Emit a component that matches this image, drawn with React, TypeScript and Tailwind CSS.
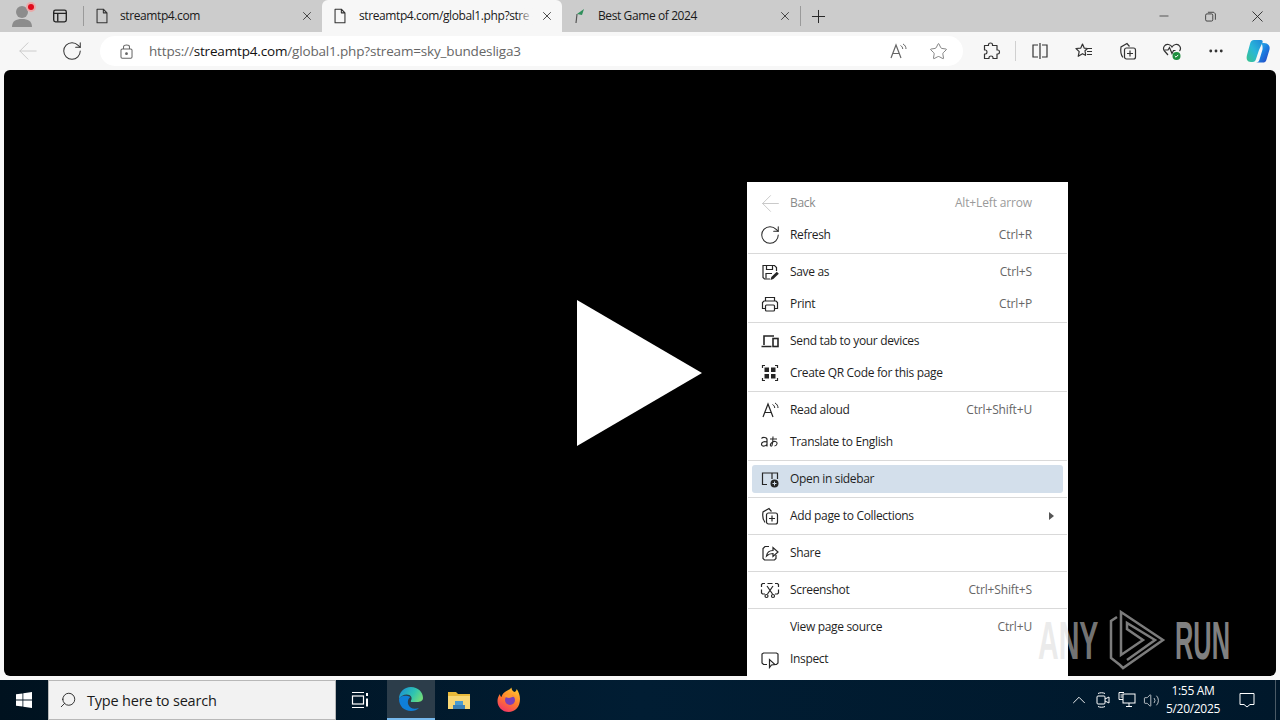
import type { ReactNode } from 'react';
import { X, Plus, Minus, ArrowLeft, RotateCw, Star, MoreHorizontal, ChevronUp, Search, Volume2 } from 'lucide-react';

const UI_FONT = "font-['Open_Sans','Noto_Sans',sans-serif]";

function Svg({ size = 20, children, className = '' }: { size?: number; children: ReactNode; className?: string }) {
  return (
    <svg width={size} height={size} viewBox="0 0 20 20" fill="none" stroke="currentColor" strokeWidth="1.2" className={className}>
      {children}
    </svg>
  );
}

const DocIcon = () => (
  <Svg size={18}>
    <path d="M4.5 2.5h7l4 4v11h-11z M11.5 2.5v4h4" strokeLinejoin="round" />
  </Svg>
);

const FlagIcon = () => (
  <svg width="14" height="16" viewBox="0 0 14 16">
    <path d="M3 15 L4 6" stroke="#555" strokeWidth="1.2" />
    <path d="M4 6 L11 1 L9 7 Z" fill="#2f8f5b" />
  </svg>
);

const ReadAloudIcon = () => (
  <Svg>
    <path d="M3 17 L8 4 L13 17 M5 12.5h6" />
    <path d="M12.5 4.5c1.5.8 2.2 2 2.2 3.5 M15 3c2 1 3 3 3 5" strokeWidth="1" />
  </Svg>
);

const SaveIcon = () => (
  <Svg>
    <path d="M10 17H4.5L3 15.5V3.5h11.5l2 2V9" />
    <path d="M6.5 3.5v4h6v-4 M6 16.5v-5h6" />
    <path d="M10.5 18l.8-3 5.5-5.2 2 2-5.5 5.3z" fill="currentColor" stroke="none" />
  </Svg>
);

const PrintIcon = () => (
  <Svg>
    <path d="M5.5 7V3.5h9V7 M5.5 14.5H2.5V8.5l1.5-1.5h12l1.5 1.5v6h-3" />
    <rect x="5.5" y="11" width="9" height="6" rx="1" />
  </Svg>
);

const DevicesIcon = () => (
  <Svg>
    <path d="M4 14V5h10 M1.5 15.5h10" strokeWidth="1.6" />
    <rect x="13" y="7.5" width="5" height="8" strokeWidth="1.6" />
  </Svg>
);

const QrIcon = () => (
  <Svg>
    <path d="M2.5 5V2.5H5 M15 2.5h2.5V5 M2.5 15v2.5H5 M15 17.5h2.5V15" />
    <g fill="currentColor" stroke="none">
      <rect x="4.5" y="4.5" width="4.5" height="4.5" />
      <rect x="11" y="4.5" width="4.5" height="4.5" />
      <rect x="4.5" y="11" width="4.5" height="4.5" />
      <rect x="11" y="11" width="4.5" height="4.5" />
    </g>
  </Svg>
);

const TranslateIcon = () => (
  <svg width="20" height="20" viewBox="0 0 20 20" fill="none" stroke="currentColor" strokeWidth="1.2">
    <path d="M1.5 6.5c1-1.500 5.500-1.500 5.500 1v7 M7 10c-3-.8-5.500 0-5.500 2.200 0 2.600 4 2.400 5.500 0" />
    <path d="M10 7h7 M13 4.500c0 4-.5 7.500-1 9-.6 1.200-2 .6-1.600-1 .5-1.800 3-3.500 5-3 2.500.6 2.200 4-.9 4.500" strokeWidth="1.1" />
  </svg>
);

const SidebarIcon = () => (
  <Svg>
    <path d="M7 15.500H2.500V4h15v6" />
    <path d="M12 4v6" />
    <circle cx="14.500" cy="14.500" r="4" fill="currentColor" stroke="none" />
    <path d="M14.500 12.500v4 M12.500 14.500h4" stroke="#d3dfeb" strokeWidth="1" />
  </Svg>
);

const CollectionsIcon = () => (
  <Svg>
    <path d="M5 16.500C3 14 2.500 9 3 6l6-3.500 2.500 3" />
    <rect x="6.500" y="7" width="11" height="11" rx="2" />
    <path d="M12 9.500v6 M9 12.500h6" />
  </Svg>
);

const ShareIcon = () => (
  <Svg>
    <path d="M9 3.500H5L3 5.500v10l1.500 1.500h10l1.500-1.500V12" />
    <path d="M6.500 13c.5-3.500 3-5.500 6.500-5.500V4.500l5 4.500-5 4.500v-3c-2.500 0-4.500.5-6.500 2.500z" />
  </Svg>
);

const ScreenshotIcon = () => (
  <Svg>
    <path d="M1.500 7V4.500l1-1H5 M7.500 3.500h5 M15 3.500h2.500l1 1V7 M18.500 9.500V13l-1 1H15 M1.500 9.500V13l1 1H5" />
    <path d="M7 6l5.500 8 M13 6l-5.500 8" />
    <circle cx="6.500" cy="16" r="1.500" />
    <circle cx="13" cy="16" r="1.500" />
  </Svg>
);

const InspectIcon = () => (
  <Svg>
    <path d="M7 15.500H3.500l-1.500-1.500V5l1.500-1h13l1.500 1v9l-1.500 1.500H15" />
    <path d="M9.500 10.500v8l2-2.500 3.500-.5z" />
  </Svg>
);

const ExtensionIcon = () => (
  <Svg>
    <path d="M7.500 3.500c0-2 4-2 4 0v1h4.500v4.500h1c2 0 2 4 0 4h-1v4.500H12v-1c0-2-4-2-4 0v1H3.500V13h1c2 0 2-4 0-4h-1V4.500h4z" strokeLinejoin="round" />
  </Svg>
);

const SplitIcon = () => (
  <Svg>
    <path d="M8 4H3v12h5 M12 4h5v12h-5 M10 2v16" />
  </Svg>
);

const FavoritesIcon = () => (
  <Svg>
    <path d="M8.500 3l1.800 4.200 3.200.3-2.500 2.300.6 3.500-.1 1-3-1.600-4.300 2.600 1-4.700L2 7.500l4.800-.4z" strokeLinejoin="round" />
    <path d="M13 7.500h5 M13 10.500h5 M13 13.500h5" />
  </Svg>
);

const HeartIcon = () => (
  <svg width="20" height="20" viewBox="0 0 20 20" fill="none" stroke="currentColor" strokeWidth="1.2">
    <path d="M6 14L2.500 10C0 7 3 2.500 6.500 3.500c1.500.4 3 1.500 3.500 2.500.6-1 2-2.100 3.500-2.500C17 2.500 20 7 17.500 10" />
    <path d="M2.500 9h3.500l1.500-2.500 2.500 6 1.500-3h2" />
    <circle cx="14.500" cy="15" r="4" fill="#1e8e3e" stroke="none" />
    <path d="M12.800 15l1.200 1.200 2.200-2.300" stroke="#fff" strokeWidth="1" />
  </svg>
);

const CopilotIcon = () => (
  <svg width="26" height="26" viewBox="0 0 26 26">
    <defs>
      <linearGradient id="cpA" x1="0" y1="0" x2="1" y2="1">
        <stop offset="0" stopColor="#38c6e8" />
        <stop offset="0.5" stopColor="#1a7fe0" />
        <stop offset="1" stopColor="#2a3fc0" />
      </linearGradient>
      <linearGradient id="cpB" x1="0" y1="1" x2="1" y2="0">
        <stop offset="0" stopColor="#3bc48c" />
        <stop offset="0.5" stopColor="#29b6d8" />
        <stop offset="1" stopColor="#1f86d8" />
      </linearGradient>
    </defs>
    <path d="M9 2h7c1.500 0 2 1 1.500 2.500L14 12l-3 9c-.5 2-1.500 3-3.500 3H6c-4 0-5-3-4-7l3-11c.5-2.500 2-4 4-4z" fill="url(#cpB)" />
    <path d="M16 5h3c4 0 6.500 3 5.500 6.500l-3 10c-.5 2.500-2 3-4 3H11c2 0 3-1 3.500-3l3-10c.5-2-.5-6.500-1.500-6.500z" fill="url(#cpA)" />
  </svg>
);

const TaskViewIcon = () => (
  <svg width="20" height="20" viewBox="0 0 20 20" fill="none" stroke="#fff" strokeWidth="1.2">
    <path d="M2 2.500h12 M2 17.500h12" />
    <rect x="2.500" y="6" width="11" height="8" />
    <path d="M17 3v3 M17 8.500v8" strokeWidth="2" />
  </svg>
);

const EdgeIcon = () => (
  <svg width="26" height="26" viewBox="0 0 26 26">
    <defs>
      <linearGradient id="edgeA" x1="0" y1="0.2" x2="1" y2="0.6">
        <stop offset="0" stopColor="#1a8fd6" />
        <stop offset="0.6" stopColor="#2fc4b0" />
        <stop offset="1" stopColor="#6fdc7c" />
      </linearGradient>
    </defs>
    <path d="M1 13C1 6 6 1 13 1c7 0 12 5 12 11 0 3-3 4-6 4h-5c-1 0-1.500-.5-1-1.500 1-1.500 1-4-1.500-5.500C8 7.500 3 9 1 13z" fill="url(#edgeA)" />
    <path d="M1 13c0 7 5 12 12 12 3.500 0 6-1 8-3-5 1.500-9 .5-10.500-3-1.500-3.500 0-7 2-8-4-2-10-2-11.500 2z" fill="#0f7fd8" />
  </svg>
);

const FolderIcon = () => (
  <svg width="24" height="22" viewBox="0 0 24 22">
    <path d="M1 3h8l2 2h12v15H1z" fill="#e8b93a" />
    <path d="M1 7h22v13H1z" fill="#f8d775" />
    <rect x="8" y="12" width="8" height="4" fill="#4a9bd1" />
    <rect x="6" y="16" width="12" height="4" fill="#3a7fb5" />
  </svg>
);

const FirefoxIcon = () => (
  <svg width="26" height="26" viewBox="0 0 26 26">
    <defs>
      <linearGradient id="ffA" x1="0.7" y1="0" x2="0.2" y2="1">
        <stop offset="0" stopColor="#ffc52e" />
        <stop offset="0.5" stopColor="#ff7a2e" />
        <stop offset="1" stopColor="#f0306a" />
      </linearGradient>
    </defs>
    <path d="M13 25C6 25 1.500 20 1.500 14c0-3 1-5 2.500-7 0 1.500.5 2.500 1.500 3 .5-3 3-5 5-6 2-1 4-2 5-3.500 0 2 1 3.500 3 4.500 1.500-.5 2-2 2.200-3 2 3 3.300 6 3.300 10 0 8-5 13-11.500 13z" fill="url(#ffA)" />
    <circle cx="14" cy="13" r="5" fill="#7b3fb8" />
    <path d="M8 9c3-2 7-2 11 1-1-.5-3-.5-4 .5-2 1-4 .5-7-1.500z" fill="#ff9a2e" />
  </svg>
);

const MeetIcon = () => (
  <svg width="16" height="18" viewBox="0 0 16 18" fill="none" stroke="#fff" strokeWidth="1">
    <rect x="2" y="5" width="8" height="8" rx="1" />
    <path d="M10 8l4-2v6l-4-2" />
    <path d="M3 2.500c2-1 5-1 7 0 M3 15.500c2 1 5 1 7 0" />
  </svg>
);

const NetworkIcon = () => (
  <svg width="18" height="18" viewBox="0 0 18 18" fill="none" stroke="#fff" strokeWidth="1">
    <rect x="5" y="3" width="12" height="9" />
    <path d="M1 1.500h5 M1 1.500v7h4 M2.500 4h2 M2.500 6h2 M8 15.500h6 M11 12v3.500" />
  </svg>
);

type MenuEntry = { label: string; shortcut?: string; icon?: ReactNode; disabled?: boolean; active?: boolean; submenu?: boolean };

const menuGroups: MenuEntry[][] = [
  [
    { label: 'Back', shortcut: 'Alt+Left arrow', icon: <ArrowLeft size={27} strokeWidth={0.8} />, disabled: true },
    { label: 'Refresh', shortcut: 'Ctrl+R', icon: <RotateCw size={22} strokeWidth={1.1} /> },
  ],
  [
    { label: 'Save as', shortcut: 'Ctrl+S', icon: <SaveIcon /> },
    { label: 'Print', shortcut: 'Ctrl+P', icon: <PrintIcon /> },
  ],
  [
    { label: 'Send tab to your devices', icon: <DevicesIcon /> },
    { label: 'Create QR Code for this page', icon: <QrIcon /> },
  ],
  [
    { label: 'Read aloud', shortcut: 'Ctrl+Shift+U', icon: <ReadAloudIcon /> },
    { label: 'Translate to English', icon: <TranslateIcon /> },
  ],
  [{ label: 'Open in sidebar', icon: <SidebarIcon />, active: true }],
  [{ label: 'Add page to Collections', icon: <CollectionsIcon />, submenu: true }],
  [{ label: 'Share', icon: <ShareIcon /> }],
  [{ label: 'Screenshot', shortcut: 'Ctrl+Shift+S', icon: <ScreenshotIcon /> }],
  [
    { label: 'View page source', shortcut: 'Ctrl+U' },
    { label: 'Inspect', icon: <InspectIcon /> },
  ],
];

function MenuRow({ item }: { item: MenuEntry }) {
  return (
    <div className="h-8 px-[5px] pt-[3px] pb-[1px]">
      <div className={`h-7 flex items-center rounded-[3px] ${item.active ? 'bg-[#d3dfeb]' : ''}`}>
        <span className={`w-[36px] h-7 flex items-center justify-center ${item.disabled ? 'text-[#c4c4c4]' : 'text-[#262626]'}`}>{item.icon}</span>
        <span className={`ml-[2px] ${item.disabled ? 'text-[#8a8a8a]' : 'text-[#1f1f1f]'}`}>{item.label}</span>
        {item.shortcut && <span className={`ml-auto mr-[31px] tracking-[-0.15px] ${item.disabled ? 'text-[#9a9a9a]' : 'text-[#666]'}`}>{item.shortcut}</span>}
        {item.submenu && <span className="ml-auto mr-[9px] border-l-[5px] border-y-[4px] border-y-transparent border-l-[#555]" />}
      </div>
    </div>
  );
}

function ContextMenu() {
  return (
    <div className="absolute left-[747px] top-[182px] w-[321px] h-[498px] overflow-hidden bg-white pt-1 text-[12px] tracking-[-0.33px]">
      {menuGroups.map((group, i) => (
        <div key={i}>
          {i > 0 && (
            <div className="h-[5px] pt-[3px]">
              <div className="h-px bg-[#d9d9d9] mx-[1px]" />
            </div>
          )}
          {group.map((item) => (
            <MenuRow key={item.label} item={item} />
          ))}
        </div>
      ))}
    </div>
  );
}

function Watermark() {
  return (
    <div className="absolute left-[1038px] top-[605px] h-[70px] flex items-center text-[54px] font-bold leading-none text-[rgba(218,218,218,0.545)] font-['Liberation_Sans',sans-serif] pointer-events-none">
      <span className="w-[62px] inline-block origin-left scale-x-[0.53] whitespace-nowrap">ANY</span>
      <svg width="75" height="70" viewBox="0 0 75 70" fill="none" stroke="#7c7c7c" strokeWidth="2.500">
        <path d="M17 12L11 16V53L20 60L23 63L63 35L21 7V50L43 35L27 24V18L55 35L27 55" />
      </svg>
      <span className="w-[56px] inline-block origin-left scale-x-[0.47] whitespace-nowrap text-[#808080]">RUN</span>
    </div>
  );
}

function Tab({ title, icon, active, width }: { title: string; icon: ReactNode; active?: boolean; width: string }) {
  return (
    <div className={`${width} h-8 flex items-center shrink-0 pl-[9px] pr-[8px] ${active ? 'bg-[#f7f7f7] rounded-t-[6px]' : ''}`}>
      <span className="w-[18px] flex justify-center text-[#333]">{icon}</span>
      <div className={`relative flex-1 overflow-hidden whitespace-nowrap text-[12px] tracking-[-0.4px] text-[#1a1a1a] ${active ? 'ml-[10px]' : 'ml-[9px]'}`}>
        {title}
        {active && <div className="absolute right-0 top-0 h-full w-4 bg-gradient-to-r from-transparent to-[#f7f7f7]" />}
      </div>
      <X size={14} strokeWidth={1.5} className="ml-[7px] text-[#333]" />
    </div>
  );
}

function TitleBar() {
  return (
    <div className="h-8 bg-[#cccccc] flex items-center">
      <div className="relative w-11 flex justify-center">
        <svg width="22" height="24" viewBox="0 0 22 24" fill="#8c8c8c">
          <circle cx="11" cy="8" r="6" />
          <path d="M1 23c0-6 4-8 10-8s10 2 10 8z" />
        </svg>
        <span className="absolute left-[28px] top-[0px] w-[6px] h-[6px] rounded-full bg-[#e00b1c] ring-2 ring-[#e9a9a9]" />
      </div>
      <div className="w-[32px] flex justify-center text-[#222]">
        <Svg size={18}>
          <rect x="3" y="3.500" width="14" height="13" rx="2" strokeWidth="1.500" />
          <path d="M3 7h14 M7.500 7v9" strokeWidth="1.500" />
        </Svg>
      </div>
      <div className="ml-[7px] w-px h-5 bg-[#9a9a9a]" />
      <Tab title="streamtp4.com" icon={<DocIcon />} width="w-[238px]" />
      <Tab title="streamtp4.com/global1.php?stre" icon={<DocIcon />} active width="w-[240px]" />
      <Tab title="Best Game of 2024" icon={<FlagIcon />} width="w-[238px]" />
      <div className="w-px h-5 bg-[#9a9a9a]" />
      <Plus size={21} strokeWidth={1.1} className="ml-[7px] text-[#222]" />
      <div className="ml-auto flex items-center text-[#222]">
        <div className="w-[46px] flex justify-center -translate-x-[1px]"><Minus size={14} strokeWidth={1.2} /></div>
        <div className="w-[46px] flex justify-center -translate-x-[1px]">
          <Svg size={13}>
            <rect x="2.500" y="6" width="11" height="11" rx="2" />
            <path d="M6 3.500h9l2.500 2.500v9" />
          </Svg>
        </div>
        <div className="w-[46px] flex justify-center"><X size={19} strokeWidth={1.1} /></div>
      </div>
    </div>
  );
}

function ToolButton({ children, width = 'w-11' }: { children: ReactNode; width?: string }) {
  return <div className={`${width} flex justify-center text-[#333]`}>{children}</div>;
}

function Toolbar() {
  return (
    <div className="h-[38px] bg-[#f7f7f7] flex items-start pt-[4px]">
      <div className="w-[100px] h-[30px] flex items-center">
        <ToolButton width="w-[56px]"><ArrowLeft size={28} strokeWidth={0.8} className="text-[#c8c8c8]" /></ToolButton>
        <ToolButton width="w-[32px]"><RotateCw size={22} strokeWidth={1.1} /></ToolButton>
      </div>
      <div className="w-[863px] h-[30px] bg-white rounded-full flex items-center pl-[18px] pr-[15px]">
        <Svg size={17} className="text-[#666]">
          <rect x="3.500" y="7" width="13" height="11" rx="1.500" />
          <path d="M6.500 7V4.500C6.500 1.500 13.500 1.500 13.500 4.500V7" />
          <circle cx="10" cy="12.500" r="1" fill="currentColor" />
        </Svg>
        <div className="ml-[14px] text-[13.5px] text-[#666] tracking-[-0.17px]">
          https://<span className="text-[#111]">streamtp4.com</span>/global1.php?stream=sky_bundesliga3
        </div>
        <div className="ml-auto flex items-center gap-[21px] text-[#666]">
          <ReadAloudIcon />
          <Star size={19} strokeWidth={1} />
        </div>
      </div>
      <div className="flex-1 h-[30px] flex items-center pl-[6px]">
        <ToolButton><ExtensionIcon /></ToolButton>
        <div className="ml-[2px] w-px h-5 bg-[#d0d0d0]" />
        <ToolButton width="w-[47px]"><SplitIcon /></ToolButton>
        <ToolButton width="w-[42px]"><FavoritesIcon /></ToolButton>
        <ToolButton width="w-[46px]"><CollectionsIcon /></ToolButton>
        <ToolButton width="w-[42px]"><HeartIcon /></ToolButton>
        <ToolButton width="w-[46px]"><MoreHorizontal size={18} strokeWidth={1.8} /></ToolButton>
        <ToolButton width="w-[38px]"><CopilotIcon /></ToolButton>
      </div>
    </div>
  );
}

function Taskbar() {
  return (
    <div className="relative z-10 h-10 bg-gradient-to-r from-[#00121f] via-[#011d33] to-[#00182b] flex items-center text-white">
      <div className="w-12 flex justify-center">
        <svg width="16" height="16" viewBox="0 0 16 16" fill="#fff">
          <path d="M0 2.300l6.500-.9v6.200H0z M7.300 1.300L16 0v7.600H7.300z M0 8.400h6.500v6.200L0 13.700z M7.300 8.400H16V16l-8.700-1.200z" />
        </svg>
      </div>
      <div className="w-[288px] h-10 bg-[#f2f2f2] border border-[#b8b8b8] flex items-center pl-[10px] text-[#1a1a1a]">
        <Search size={18} strokeWidth={1.2} className="-scale-x-100 text-[#222]" />
        <span className="ml-[10px] pt-[1px] text-[14.5px] tracking-[-0.2px]">Type here to search</span>
      </div>
      <div className="w-[51px] flex justify-center pr-[3px]"><TaskViewIcon /></div>
      <div className="w-12 h-10 bg-[#2c3d4a] border-b-2 border-[#76b9ed] flex items-center justify-center"><EdgeIcon /></div>
      <div className="w-12 flex justify-center"><FolderIcon /></div>
      <div className="w-[52px] flex justify-center"><FirefoxIcon /></div>
      <div className="ml-auto flex items-center">
        <ChevronUp size={22} strokeWidth={1} />
        <div className="ml-[1px] w-6 flex justify-center"><MeetIcon /></div>
        <div className="w-6 flex justify-center"><NetworkIcon /></div>
        <div className="w-6 flex justify-center"><Volume2 size={17} strokeWidth={1} /></div>
        <div className="w-[60px] text-center text-[12px] leading-[18px] tracking-[-0.3px] whitespace-nowrap">
          <div>1:55 AM</div>
          <div>5/20/2025</div>
        </div>
        <div className="ml-[5px] w-[38px] flex justify-center">
          <svg width="18" height="18" viewBox="0 0 18 18" fill="none" stroke="#fff" strokeWidth="1">
            <path d="M2 2.500h14v11h-4l-3 2.500-3-2.500H2z" />
          </svg>
        </div>
        <div className="ml-[9px] w-[5px] h-10 border-l border-[#4a5a66]" />
      </div>
    </div>
  );
}

export default function App() {
  return (
    <div className={`relative w-[1280px] h-[720px] overflow-hidden bg-[#f7f7f7] ${UI_FONT}`}>
      <TitleBar />
      <Toolbar />
      <div className="mx-1 h-[606px] bg-black rounded-[6px] flex items-center justify-center">
        <svg width="126" height="146" viewBox="0 0 126 146">
          <path d="M0 0L125 73L0 146z" fill="#fff" />
        </svg>
      </div>
      <div className="h-1" />
      <ContextMenu />
      <Watermark />
      <Taskbar />
    </div>
  );
}
